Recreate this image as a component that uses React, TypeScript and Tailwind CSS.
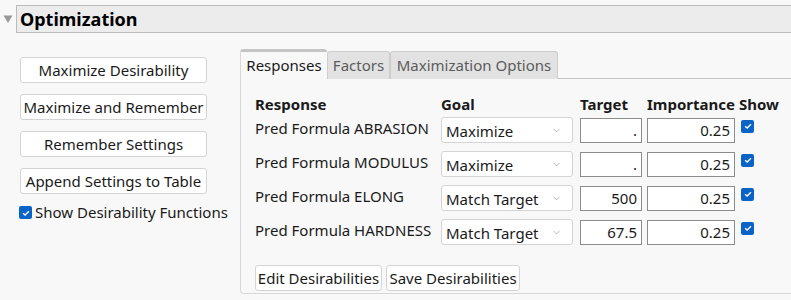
import { ChevronDown } from 'lucide-react'

const font = { fontFamily: '"Noto Sans", "Open Sans", sans-serif' }

const rows = [
  { name: 'Pred Formula ABRASION', goal: 'Maximize', target: '.', importance: '0.25' },
  { name: 'Pred Formula MODULUS', goal: 'Maximize', target: '.', importance: '0.25' },
  { name: 'Pred Formula ELONG', goal: 'Match Target', target: '500', importance: '0.25' },
  { name: 'Pred Formula HARDNESS', goal: 'Match Target', target: '67.5', importance: '0.25' },
]

const Check = ({ className = '' }: { className?: string }) => (
  <span className={`flex h-[13px] w-[13px] items-center justify-center rounded-[2px] bg-[#0a64c8] ${className}`}>
    <svg viewBox="0 0 12 12" className="h-[10px] w-[10px]">
      <path d="M2.5 6.2 L5 8.5 L9.5 3.8" fill="none" stroke="white" strokeWidth="1.6" />
    </svg>
  </span>
)

const SideButton = ({ label }: { label: string }) => (
  <button
    type="button"
    className="h-[26px] w-[187px] rounded-[3px] border border-[#d4d4d4] bg-white text-[15px] leading-none text-[#1a1a1a]"
  >
    {label}
  </button>
)

const App = () => {
  return (
    <div className="h-[300px] w-[791px] overflow-hidden bg-[#f8f8f8] text-[#1a1a1a]" style={font}>
      <div className="flex items-center pt-[5px]">
        <svg viewBox="0 0 10 10" className="ml-[3px] mr-[3px] h-[10px] w-[10px]">
          <polygon points="0.5,1.5 9.5,1.5 5,9" fill="#9a9a9a" />
        </svg>
        <div className="flex h-[28px] flex-1 items-center border border-r-0 border-[#bcbcbc] bg-[#ececec] pl-[3px] text-[18px] font-bold text-black">
          Optimization
        </div>
      </div>

      <div className="flex pt-[16px]">
        <div className="ml-[20px] flex w-[220px] flex-col gap-[11px] pt-[8px]">
          <SideButton label="Maximize Desirability" />
          <SideButton label="Maximize and Remember" />
          <SideButton label="Remember Settings" />
          <SideButton label="Append Settings to Table" />
          <label className="-ml-px flex items-center gap-[3px] text-[15px] leading-none">
            <Check />
            Show Desirability Functions
          </label>
        </div>

        <div className="flex-1">
          <div className="flex h-[30px] items-end">
            <div className="flex h-[30px] w-[87px] items-center justify-center rounded-t-[3px] border-t-[3px] border-l border-[#c4c4c4] border-l-[#d8d8d8] bg-[#f8f8f8] text-[15px]">
              Responses
            </div>
            <div className="flex h-[28px] w-[63px] items-center justify-center rounded-t-[3px] border border-b-0 border-[#cdcdcd] bg-[#e2e2e2] text-[15px] text-[#5c5c5c]">
              Factors
            </div>
            <div className="flex h-[28px] w-[168px] items-center justify-center rounded-t-[3px] border border-b-0 border-[#cdcdcd] bg-[#e2e2e2] text-[15px] text-[#5c5c5c]">
              Maximization Options
            </div>
            <div className="flex-1 border-b border-[#c4c4c4]" />
          </div>

          <div className="h-[215px] rounded-bl-[4px] border-b border-l border-[#d8d8d8] pl-[14px] pt-[18px]">
            <div className="grid grid-cols-[186px_139px_67px_92px_auto] items-center gap-y-[8px] text-[15px] leading-none">
              <div className="-mb-[3px] font-bold">Response</div>
              <div className="-mb-[3px] font-bold">Goal</div>
              <div className="-mb-[3px] font-bold">Target</div>
              <div className="-mb-[3px] font-bold">Importance</div>
              <div className="-mb-[3px] font-bold">Show</div>
              {rows.map((row) => (
                <div key={row.name} className="contents">
                  <div className="-mt-[3px]">{row.name}</div>
                  <div className="flex h-[26px] w-[132px] items-center justify-between rounded-[3px] border border-[#d4d4d4] bg-white pl-[4px] pr-[10px]">
                    <span className="pt-[2px]">{row.goal}</span>
                    <ChevronDown size={11} strokeWidth={1.25} className="text-[#8a8a8a]" />
                  </div>
                  <div className="flex h-[25px] w-[62px] items-center justify-end border border-[#8c8c8c] bg-white pr-[4px]">
                    {row.target}
                  </div>
                  <div className="flex h-[25px] w-[88px] items-center justify-end border border-[#8c8c8c] bg-white pr-[4px]">
                    {row.importance}
                  </div>
                  <div className="-mt-[8px] pl-[2px]">
                    <Check />
                  </div>
                </div>
              ))}
            </div>

            <div className="mt-[20px] flex gap-[4px]">
              <button
                type="button"
                className="h-[26px] w-[127px] rounded-[3px] border border-[#d4d4d4] bg-white text-[15px] leading-none"
              >
                Edit Desirabilities
              </button>
              <button
                type="button"
                className="h-[26px] w-[134px] rounded-[3px] border border-[#d4d4d4] bg-white text-[15px] leading-none"
              >
                Save Desirabilities
              </button>
            </div>
          </div>
        </div>
      </div>
    </div>
  )
}

export default App
